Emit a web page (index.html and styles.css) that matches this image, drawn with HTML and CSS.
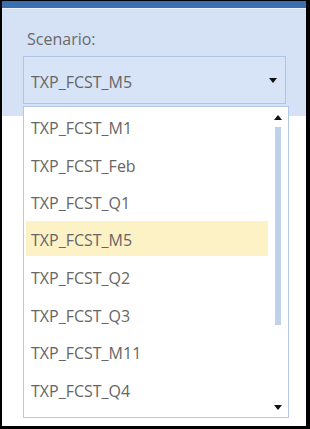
FILE: index.html
```html
<!DOCTYPE html>
<html lang="en">
<head>
  <meta charset="UTF-8">
  <title>Scenario</title>
  <link rel="stylesheet" href="styles.css">
</head>
<body>

<div class="frame">
  <div class="titlebar"></div>
  <section class="panel">
    <label class="label">Scenario:</label>
    <div class="select">
      <span class="value">TXP_FCST_M5</span>
      <span class="caret down"></span>
    </div>
  </section>

  <div class="dropdown">
    <ul class="items">
      <li>TXP_FCST_M1</li>
      <li>TXP_FCST_Feb</li>
      <li>TXP_FCST_Q1</li>
      <li class="selected">TXP_FCST_M5</li>
      <li>TXP_FCST_Q2</li>
      <li>TXP_FCST_Q3</li>
      <li>TXP_FCST_M11</li>
      <li>TXP_FCST_Q4</li>
    </ul>
    <div class="scroll">
      <span class="caret up"></span>
      <div class="track"><div class="thumb"></div></div>
      <span class="caret down"></span>
    </div>
  </div>
</div>

</body>
</html>
```

FILE: styles.css
```css
body {
  margin: 0;
  font-family: "Open Sans", "Noto Sans", sans-serif;
  background: #fff;
}
.frame {
  position: relative;
  width: 310px;
  height: 429px;
  box-sizing: border-box;
  border-style: solid;
  border-color: #000;
  border-width: 1px 4px 3px 2px;
  background: #fff;
}
.titlebar {
  height: 7px;
  background: #3a70b2;
  border-bottom: 1px solid #eef2fa;
}
.panel {
  height: 107px;
  box-sizing: border-box;
  background: #d5e1f5;
  padding: 19px 20px 0 21px;
}
.label {
  display: block;
  font-size: 16px;
  line-height: 22px;
  color: #6a6a6a;
  margin-left: 4px;
}
.select {
  display: flex;
  align-items: center;
  justify-content: space-between;
  height: 46px;
  margin-top: 6px;
  padding: 0 8px 0 7px;
  border: 1px solid #afc3e4;
  background: #d7e3f6;
}
.value {
  font-size: 16px;
  color: #666;
  padding-top: 4px;
}
.caret {
  width: 0;
  height: 0;
  border-left: 4px solid transparent;
  border-right: 4px solid transparent;
}
.caret.down {
  border-top: 5px solid #111;
}
.caret.up {
  border-bottom: 5px solid #111;
}
.dropdown {
  position: absolute;
  left: 21px;
  top: 105px;
  width: 264px;
  height: 310px;
  display: flex;
  border: 1px solid #b3c7e8;
  background: #fff;
}
.items {
  list-style: none;
  margin: 0;
  padding: 0 0 0 2px;
  flex: 1;
}
.items li {
  height: 37.5px;
  box-sizing: border-box;
  padding: 5px 0 0 5px;
  line-height: 32.5px;
  font-size: 16px;
  color: #666;
}
.items li.selected {
  background: #fdf1c6;
  height: 35px;
  padding-top: 4px;
  line-height: 31px;
  margin: 1.5px 0 1px;
}
.scroll {
  width: 20px;
  display: flex;
  flex-direction: column;
  align-items: center;
  padding: 8px 0 7px;
}
.track {
  flex: 1;
  padding: 7px 0 80px;
}
.thumb {
  width: 6px;
  height: 100%;
  background: #c0d1ec;
}
```
